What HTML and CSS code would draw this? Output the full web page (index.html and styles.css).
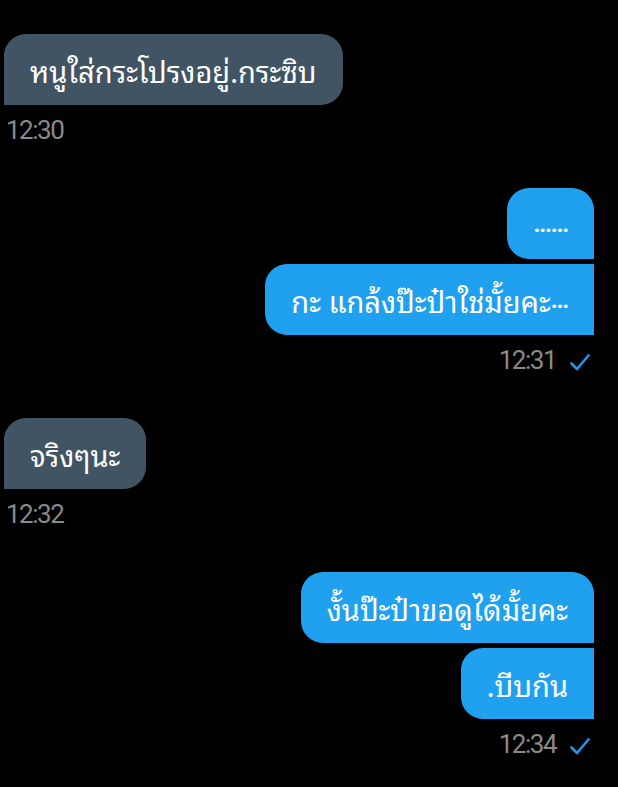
FILE: index.html
```html
<!DOCTYPE html>
<html lang="th">
<head>
  <meta charset="UTF-8">
  <meta name="viewport" content="width=device-width, initial-scale=1.0">
  <title>Chat</title>
  <link rel="stylesheet" href="styles.css">
</head>
<body>
  <div class="chat">
    <div class="group in">
      <div class="bubble">หนูใส่กระโปรงอยู่.กระซิบ</div>
      <div class="meta"><span class="time">12:30</span></div>
    </div>

    <div class="group out">
      <div class="bubble"><span class="dots">......</span></div>
      <div class="bubble">กะ แกล้งป๊ะป๋าใช่มั้ยคะ<span class="dots">...</span></div>
      <div class="meta">
        <span class="time">12:31</span>
        <svg class="tick" width="20" height="17" viewBox="0 0 20 17"><path d="M1.5 9.5 L7 15 L18.5 1.5" fill="none" stroke="#2196e8" stroke-width="2.6" stroke-linecap="round" stroke-linejoin="round"/></svg>
      </div>
    </div>

    <div class="group in">
      <div class="bubble">จริงๆนะ</div>
      <div class="meta"><span class="time">12:32</span></div>
    </div>

    <div class="group out">
      <div class="bubble">งั้นป๊ะป๋าขอดูได้มั้ยคะ</div>
      <div class="bubble">.บีบกัน</div>
      <div class="meta">
        <span class="time">12:34</span>
        <svg class="tick" width="20" height="17" viewBox="0 0 20 17"><path d="M1.5 9.5 L7 15 L18.5 1.5" fill="none" stroke="#2196e8" stroke-width="2.6" stroke-linecap="round" stroke-linejoin="round"/></svg>
      </div>
    </div>
  </div>
</body>
</html>
```

FILE: styles.css
```css
body {
  margin: 0;
  background: #000;
  font-family: "Noto Sans Thai Looped", "Noto Sans Thai", Garuda, Loma, "Noto Sans", sans-serif;
  color: #fff;
}
.chat {
  padding: 34px 0 0 0;
}
.group {
  display: flex;
  flex-direction: column;
  gap: 5px;
  margin-bottom: 43px;
}
.group.in {
  align-items: flex-start;
  padding-left: 4px;
}
.group.out {
  align-items: flex-end;
  padding-right: 24px;
}
.bubble {
  height: 71px;
  box-sizing: border-box;
  padding: 0 26px;
  display: flex;
  align-items: center;
  font-size: 29px;
  white-space: nowrap;
  border-radius: 22px;
}
.in .bubble {
  background: #405463;
  border-bottom-left-radius: 0;
}
.out .bubble {
  background: #1fa1ef;
  border-bottom-right-radius: 0;
}
.out .bubble + .bubble {
  border-top-right-radius: 0;
}
.dots {
  font-family: Roboto, sans-serif;
  font-size: 24px;
  font-weight: 700;
  letter-spacing: -1.2px;
}
.meta {
  display: flex;
  align-items: center;
  gap: 14px;
  margin-top: 5px;
  height: 30px;
}
.in .meta {
  padding-left: 2px;
}
.out .meta {
  padding-right: 4px;
}
.time {
  font-family: Roboto, "Liberation Sans", sans-serif;
  font-weight: 400;
  font-size: 26px;
  line-height: 30px;
  letter-spacing: -1.5px;
  color: #8a8a8a;
}
.tick {
  display: block;
  margin-top: 4px;
}
```
